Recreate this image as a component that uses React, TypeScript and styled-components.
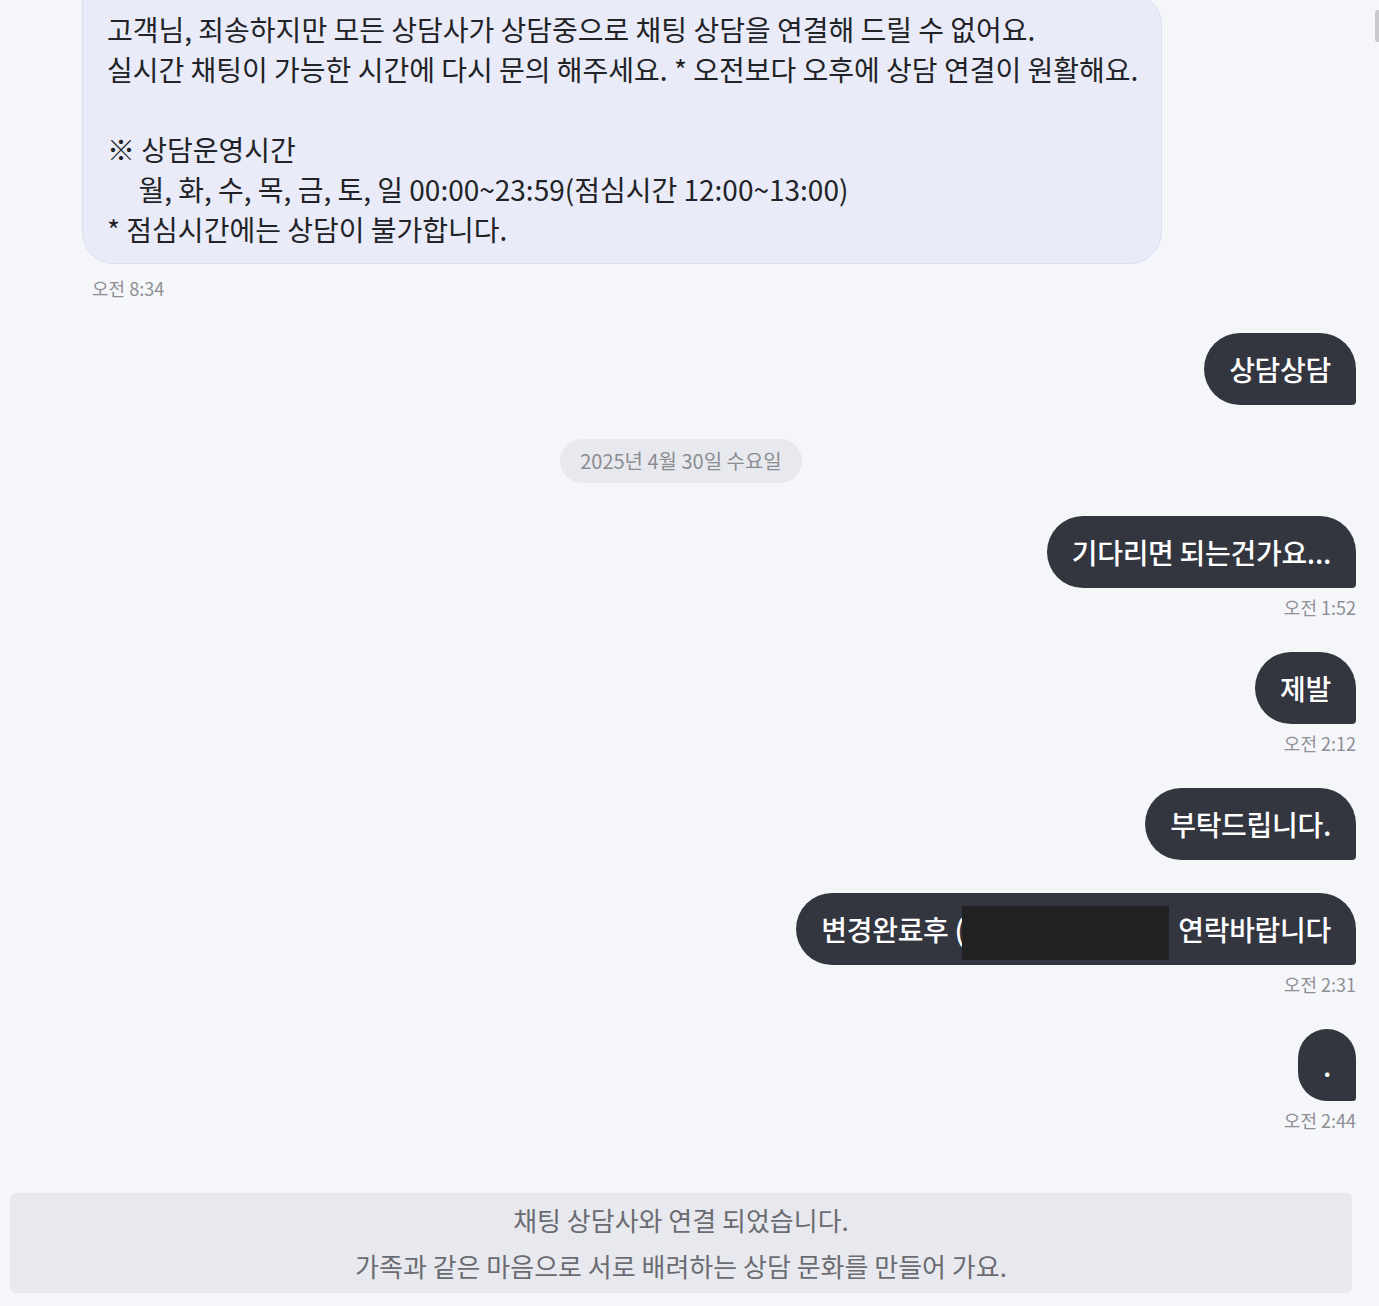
import styled, { createGlobalStyle } from "styled-components";

const GlobalStyle = createGlobalStyle`
  html, body {
    margin: 0;
    padding: 0;
    background: #f5f6fa;
    overflow: hidden;
  }
  body {
    font-family: "Noto Sans CJK KR", "Noto Sans", sans-serif;
    color: #222326;
  }
`;

const Page = styled.div`
  width: 1379px;
  height: 1306px;
  box-sizing: border-box;
  padding: 0 23px 12px 10px;
  display: flex;
  flex-direction: column;
  overflow: hidden;
`;

const Group = styled.div<{ $side: "left" | "right" }>`
  display: flex;
  flex-direction: column;
  align-items: ${(p) => (p.$side === "left" ? "flex-start" : "flex-end")};
  padding-left: ${(p) => (p.$side === "left" ? "72px" : "0")};
  margin-top: 33px;
  &:first-child {
    margin-top: -7px;
  }
`;

const ReceivedBubble = styled.div`
  box-sizing: border-box;
  padding: 15px 23px 14px 24px;
  background: #e9ebf8;
  border: 1px solid #dcdef0;
  border-radius: 4px 32px 32px 32px;
  font-size: 28px;
  line-height: 40px;
  white-space: pre-wrap;
  color: #222326;
`;

const SentBubble = styled.div`
  box-sizing: border-box;
  height: 72px;
  padding: 16px 25px;
  background: #33363f;
  color: #ffffff;
  border-radius: 36px 36px 4px 36px;
  font-size: 28px;
  line-height: 40px;
  font-weight: 500;
  letter-spacing: -0.3px;
  white-space: nowrap;
`;

const Time = styled.div<{ $side: "left" | "right" }>`
  margin-top: ${(p) => (p.$side === "left" ? "12px" : "7px")};
  padding-left: ${(p) => (p.$side === "left" ? "10px" : "0")};
  font-size: 18px;
  line-height: 24px;
  color: #8e8f94;
`;

const DateRow = styled.div`
  display: flex;
  justify-content: center;
  margin-top: 34px;
  padding-right: 4px;
`;

const DatePill = styled.div`
  height: 44px;
  padding: 0 20px;
  border-radius: 22px;
  background: #e8e9ee;
  color: #8b8c91;
  font-size: 20px;
  line-height: 44px;
`;

const Redacted = styled.span`
  display: inline-block;
  width: 207px;
  height: 54px;
  margin: -7px 9px -7px -2px;
  vertical-align: middle;
  background: #222222;
`;

const Notice = styled.div`
  margin-top: 61px;
  margin-right: 4px;
  padding: 4px 0;
  border-radius: 6px;
  background: #e8e9ee;
  color: #6b6c72;
  font-size: 26px;
  line-height: 46px;
  text-align: center;
`;

const ScrollThumb = styled.div`
  position: fixed;
  top: 10px;
  right: 0;
  width: 4px;
  height: 32px;
  border-radius: 3px 0 0 3px;
  background: #c8c9cc;
`;

type Sent = { text: string; time?: string };

const sentBefore: Sent[] = [{ text: "상담상담" }];

const sentAfter: Sent[] = [
  { text: "기다리면 되는건가요...", time: "오전 1:52" },
  { text: "제발", time: "오전 2:12" },
  { text: "부탁드립니다." },
];

const notice =
  "고객님, 죄송하지만 모든 상담사가 상담중으로 채팅 상담을 연결해 드릴 수 없어요.\n" +
  "실시간 채팅이 가능한 시간에 다시 문의 해주세요. * 오전보다 오후에 상담 연결이 원활해요.\n" +
  "\n" +
  "※ 상담운영시간\n" +
  "     월, 화, 수, 목, 금, 토, 일 00:00~23:59(점심시간 12:00~13:00)\n" +
  "* 점심시간에는 상담이 불가합니다.";

const SentMessage = ({ text, time }: Sent) => (
  <Group $side="right">
    <SentBubble>{text}</SentBubble>
    {time && <Time $side="right">{time}</Time>}
  </Group>
);

const App = () => {
  return (
    <>
      <GlobalStyle />
      <Page>
        <Group $side="left">
          <ReceivedBubble>{notice}</ReceivedBubble>
          <Time $side="left">오전 8:34</Time>
        </Group>
        {sentBefore.map((m, i) => (
          <SentMessage key={i} {...m} />
        ))}
        <DateRow>
          <DatePill>2025년 4월 30일 수요일</DatePill>
        </DateRow>
        {sentAfter.map((m, i) => (
          <SentMessage key={i} {...m} />
        ))}
        <Group $side="right">
          <SentBubble>
            변경완료후 (<Redacted />
            연락바랍니다
          </SentBubble>
          <Time $side="right">오전 2:31</Time>
        </Group>
        <SentMessage text="." time="오전 2:44" />
        <Notice>
          채팅 상담사와 연결 되었습니다.
          <br />
          가족과 같은 마음으로 서로 배려하는 상담 문화를 만들어 가요.
        </Notice>
      </Page>
      <ScrollThumb />
    </>
  );
};

export default App;
